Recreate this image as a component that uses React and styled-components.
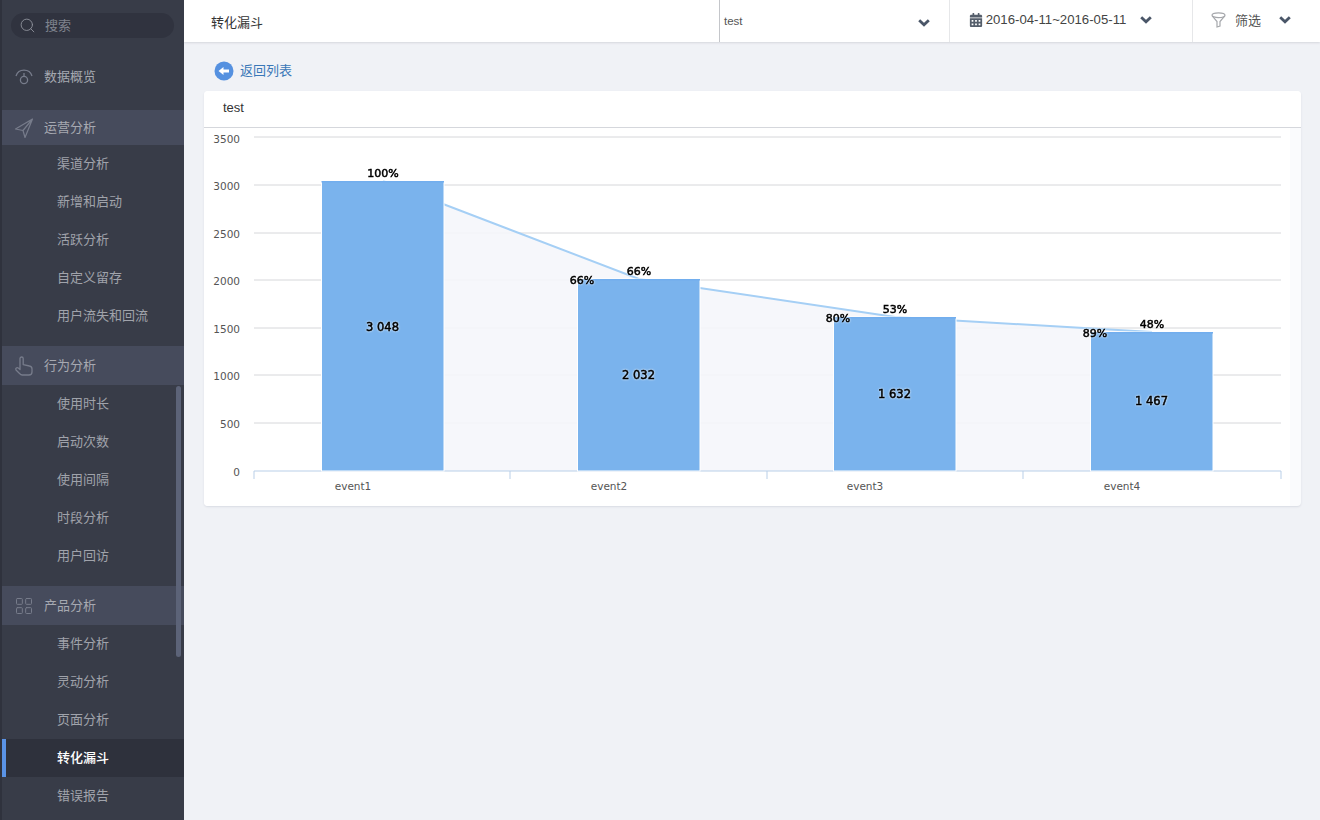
import React from 'react';
import styled, { createGlobalStyle } from 'styled-components';
import { FaCalendarAlt } from 'react-icons/fa';
import { Search, LayoutGrid } from 'lucide-react';

const GlobalStyle = createGlobalStyle`
    html, body {
        margin: 0;
        padding: 0;
        height: 100%;
        overflow: hidden;
        background: #f0f2f6;
        font-family: "Liberation Sans", "Noto Sans CJK SC", sans-serif;
    }
`;

const SendIcon = () => (
    <svg width="20" height="20" viewBox="0 0 20 20" fill="none" stroke="currentColor" strokeWidth="1.2" strokeLinejoin="round">
        <path d="M18.5 1L1.5 11L9 12.5L11 19.5ZM9 12.5L18.5 1" />
    </svg>
);

const HandIcon = () => (
    <svg width="20" height="20" viewBox="0 0 20 20" fill="none" stroke="currentColor" strokeWidth="1.3" strokeLinejoin="round">
        <path d="M6 13.5V2.6a1.6 1.6 0 0 1 3.2 0V8.6L15.5 10a3 3 0 0 1 2.5 3V16a3 3 0 0 1-3 3H8.2a3 3 0 0 1-2.4-1.3L2 14a1.5 1.5 0 0 1 2.3-1.9Z" />
    </svg>
);

const GaugeIcon = () => (
    <svg width="20" height="20" viewBox="0 0 20 20" fill="none" stroke="currentColor" strokeWidth="1.3">
        <path d="M2 10a8.4 8.4 0 0 1 16 0" />
        <circle cx="10" cy="14" r="3.6" />
        <path d="M10 10.4V7" />
    </svg>
);

const ChevronIcon = () => (
    <svg width="12" height="8" viewBox="0 0 12 8" fill="none" stroke="#4a5668" strokeWidth="2.8">
        <path d="M1.2 1.2L6 5.8L10.8 1.2" />
    </svg>
);

const groups = [
    { title: '运营分析', icon: <SendIcon />, short: true,
      items: ['渠道分析', '新增和启动', '活跃分析', '自定义留存', '用户流失和回流'] },
    { title: '行为分析', icon: <HandIcon />,
      items: ['使用时长', '启动次数', '使用间隔', '时段分析', '用户回访'] },
    { title: '产品分析', icon: <LayoutGrid size={22} strokeWidth={1.2} />,
      items: ['事件分析', '灵动分析', '页面分析', '转化漏斗', '错误报告'] },
];

const bars = [
    { x: 322, top: 181, name: 'event1', value: '3 048', valueY: 331, pct: '100%' },
    { x: 578, top: 279, name: 'event2', value: '2 032', valueY: 379, pct: '66%', step: '66%' },
    { x: 834, top: 317, name: 'event3', value: '1 632', valueY: 398, pct: '53%', step: '80%' },
    { x: 1091, top: 332, name: 'event4', value: '1 467', valueY: 405, pct: '48%', step: '89%' },
];

const yAxis = [
    { y: 137, ly: 143, label: '3500' },
    { y: 185, ly: 190, label: '3000' },
    { y: 233, ly: 238, label: '2500' },
    { y: 280, ly: 285, label: '2000' },
    { y: 328, ly: 333, label: '1500' },
    { y: 375, ly: 380, label: '1000' },
    { y: 423, ly: 428, label: '500' },
    { y: 471, ly: 476, label: '0' },
];

const Funnel = () => {
    const points = bars.map(b => `${b.x + 61},${b.top}`).join(' ');
    return (
        <ChartSvg viewBox="204 128 1086 378">
            {yAxis.map(t => (
                <g key={t.label}>
                    {t.y !== 471 && <GridLine x1="254" x2="1281" y1={t.y} y2={t.y} />}
                    <AxisText x="240" y={t.ly} textAnchor="end">{t.label}</AxisText>
                </g>
            ))}
            <polygon points={`${points} 1152,471 383,471`} fill="#f5f6fb" fillOpacity="0.88" />
            <polyline points={points} fill="none" stroke="#a5cff5" strokeWidth="2" />
            <path d="M254 479V471H1281V479M510 471V479M767 471V479M1023 471V479" fill="none" stroke="#b9cfe8" />
            {bars.map(b => (
                <rect key={b.name} x={b.x - 0.5} y={b.top} width="122.5" height={471 - b.top} fill="#7ab3ed" stroke="#fff" strokeWidth="1" />
            ))}
            {bars.map(b => <rect key={b.name} x={b.x - 0.5} y={b.top} width="122.5" height="1.5" fill="#72aeee" />)}
            {bars.map(b => (
                <g key={b.name}>
                    <AxisText x={b.x + 31} y="490" textAnchor="middle">{b.name}</AxisText>
                    <DataLabel x={b.x + 61} y={b.top - 4} textAnchor="middle">{b.pct}</DataLabel>
                    {b.step && <DataLabel x={b.x + 4} y={b.top + 5} textAnchor="middle">{b.step}</DataLabel>}
                    <ValueLabel x={b.x + 60.5} y={b.valueY} textAnchor="middle">{b.value}</ValueLabel>
                </g>
            ))}
        </ChartSvg>
    );
};

export default function App() {
    return (
        <Page>
            <GlobalStyle />
            <Sidebar>
                <SearchBox>
                    <Search size={17} strokeWidth={1.3} />
                    <span>搜索</span>
                </SearchBox>
                <OverviewItem>
                    <HeadIcon><GaugeIcon /></HeadIcon>
                    <span>数据概览</span>
                </OverviewItem>
                {groups.map(g => (
                    <Group key={g.title}>
                        <GroupHead $short={g.short}>
                            <HeadIcon>{g.icon}</HeadIcon>
                            <span>{g.title}</span>
                        </GroupHead>
                        {g.items.map(item => (
                            <SubItem key={item} $active={item === '转化漏斗'}>{item}</SubItem>
                        ))}
                    </Group>
                ))}
                <ScrollThumb />
            </Sidebar>
            <Main>
                <TopBar>
                    <PageTitle>转化漏斗</PageTitle>
                    <EventSelect>
                        test
                        <Chevron><ChevronIcon /></Chevron>
                    </EventSelect>
                    <DateSelect>
                        <FaCalendarAlt size={14} color="#555e6b" />
                        <DateText>2016-04-11~2016-05-11</DateText>
                        <ChevronIcon />
                    </DateSelect>
                    <FilterSelect>
                        <svg width="15" height="16" viewBox="0 0 15 16" fill="none" stroke="#a6a8ac" strokeWidth="1.2">
                            <ellipse cx="7.5" cy="3.2" rx="6.5" ry="2.4" />
                            <path d="M1.2 3.8L6 9.5V15L9 14V9.5L13.8 3.8" />
                        </svg>
                        <FilterText>筛选</FilterText>
                        <ChevronIcon />
                    </FilterSelect>
                </TopBar>
                <BackLink>
                    <svg width="20" height="20" viewBox="0 0 20 20">
                        <circle cx="10" cy="10" r="9.5" fill="#5591e0" />
                        <path d="M4.5 10L9.5 6V8.4H15V11.6H9.5V14Z" fill="#fff" />
                    </svg>
                    <BackText>返回列表</BackText>
                </BackLink>
                <Card>
                    <CardHead>test</CardHead>
                    <ChartWrap>
                        <Funnel />
                    </ChartWrap>
                </Card>
            </Main>
        </Page>
    );
}

const Page = styled.div`
    display: flex;
    width: 1320px;
    height: 820px;
    overflow: hidden;
`;

const Sidebar = styled.aside`
    position: relative;
    flex: 0 0 184px;
    height: 820px;
    padding-top: 13px;
    box-sizing: border-box;
    overflow: hidden;
    background: #383c48;
    border-left: 2px solid #2f323d;
    font-family: "Noto Sans CJK SC", sans-serif;
    font-size: 13px;
    span {
        margin-bottom: 2px;
    }
`;

const SearchBox = styled.div`
    display: flex;
    align-items: center;
    gap: 9px;
    height: 25px;
    margin: 0 10px 19px 9px;
    padding-left: 8px;
    border-radius: 13px;
    background: #30333f;
    color: #7f838e;
    svg {
        color: #8d909a;
    }
`;

const HeadIcon = styled.span`
    display: flex;
    justify-content: center;
    width: 20px;
    margin-right: 10px;
    color: #777c8b;
    && {
        margin-bottom: 0;
    }
`;

const OverviewItem = styled.div`
    display: flex;
    align-items: center;
    height: 38px;
    padding-left: 12px;
    color: #a6a9b1;
`;

const Group = styled.section`
    margin-top: 15px;
    & + & {
        margin-top: 11px;
    }
`;

const GroupHead = styled.div`
    display: flex;
    align-items: center;
    height: ${props => props.$short ? 35 : 39}px;
    padding-left: 12px;
    background: #464b5c;
    color: #a6a9b1;
`;

const SubItem = styled.div`
    display: flex;
    align-items: center;
    height: 38px;
    padding-left: ${props => props.$active ? 51 : 55}px;
    padding-bottom: 3px;
    box-sizing: border-box;
    border-left: ${props => props.$active ? '4px solid #5a93e6' : '0'};
    background: ${props => props.$active ? '#2e313c' : 'transparent'};
    color: ${props => props.$active ? '#ffffff' : '#a0a3ab'};
    font-weight: ${props => props.$active ? 500 : 400};
`;

const ScrollThumb = styled.div`
    position: absolute;
    top: 386px;
    left: 174px;
    width: 5px;
    height: 271px;
    border-radius: 3px;
    background: #5c6378;
`;

const Main = styled.main`
    flex: 1;
    min-width: 0;
    background: #f0f2f6;
`;

const TopBar = styled.header`
    display: flex;
    align-items: stretch;
    height: 42px;
    background: #fff;
    box-shadow: 0 1px 2px #d5d7dc;
`;

const PageTitle = styled.div`
    display: flex;
    align-items: center;
    flex: 0 0 535px;
    padding-left: 27px;
    box-sizing: border-box;
    color: #333;
    font-size: 13px;
`;

const EventSelect = styled.div`
    position: relative;
    display: flex;
    align-items: center;
    flex: 0 0 230px;
    padding-left: 4px;
    box-sizing: border-box;
    border-left: 1px solid #c4c6ca;
    color: #555;
    font-size: 11.5px;
`;

const Chevron = styled.span`
    position: absolute;
    right: 19px;
    top: 17px;
`;

const DateSelect = styled.div`
    display: flex;
    align-items: center;
    flex: 0 0 243px;
    padding-left: 19px;
    padding-bottom: 3px;
    box-sizing: border-box;
    border-left: 1px solid #e6e7e9;
`;

const DateText = styled.span`
    margin: 0 14px 0 2.7px;
    color: #444;
    font-size: 13.2px;
`;

const FilterSelect = styled.div`
    display: flex;
    align-items: center;
    flex: 1;
    padding-left: 18px;
    padding-bottom: 3px;
    border-left: 1px solid #e6e7e9;
`;

const FilterText = styled.span`
    margin: 0 18px 0 9px;
    color: #555;
    font-size: 13px;
`;

const BackLink = styled.a`
    display: flex;
    align-items: center;
    gap: 6px;
    height: 49px;
    padding: 8px 0 0 30px;
    box-sizing: border-box;
    color: #3a78b8;
    font-size: 13px;
`;

const BackText = styled.span`
    margin-bottom: 2px;
`;

const Card = styled.section`
    margin: 0 19px 0 20px;
    height: 415px;
    border-radius: 4px;
    overflow: hidden;
    background: #fafbfd;
    box-shadow: 0 1px 2px #d8dbe3;
`;

const CardHead = styled.div`
    display: flex;
    align-items: center;
    height: 33px;
    padding: 0 0 3px 19px;
    background: #fff;
    border-bottom: 1px solid #d5d7dc;
    color: #333;
    font-size: 13px;
`;

const ChartWrap = styled.div`
    width: 1086px;
    height: 378px;
    background: #fff;
`;

const ChartSvg = styled.svg`
    display: block;
    width: 1086px;
    height: 378px;
`;

const GridLine = styled.line`
    stroke: #d6d7da;
    stroke-width: 1;
`;

const AxisText = styled.text`
    fill: #555;
    font-family: "DejaVu Sans", sans-serif;
    font-size: 10.5px;
`;

const DataLabel = styled.text`
    fill: #000;
    stroke: #000;
    stroke-width: 0.5px;
    font-family: "DejaVu Sans", sans-serif;
    font-size: 11px;
    filter: drop-shadow(0 0 1px #fff);
`;

const ValueLabel = styled(DataLabel)`
    font-size: 11.5px;
`;
